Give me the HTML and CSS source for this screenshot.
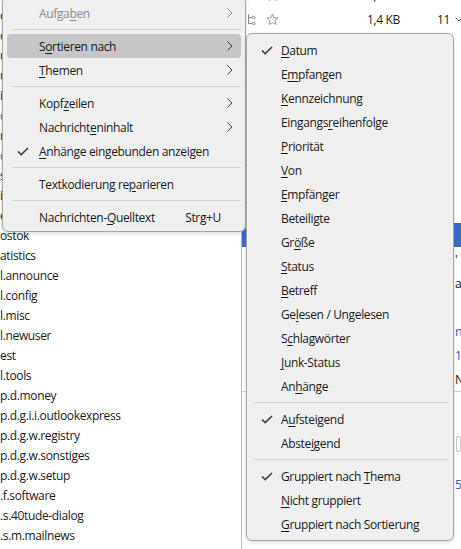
FILE: index.html
```html
<!DOCTYPE html>
<html lang="de">
<head>
<meta charset="utf-8">
<title>Ansicht</title>
<link rel="stylesheet" href="styles.css">
</head>
<body>
<div class="app">
  <aside class="folders">
    <ul class="folder-list">
      <li>o</li>
      <li>c</li>
      <li>u</li>
      <li>u</li>
      <li>i</li>
      <li class="link">d</li>
      <li>r</li>
      <li class="link">d</li>
      <li>s</li>
      <li>i</li>
      <li>e</li>
      <li>ostok</li>
      <li>atistics</li>
      <li>l.announce</li>
      <li>l.config</li>
      <li>l.misc</li>
      <li>l.newuser</li>
      <li>est</li>
      <li>l.tools</li>
      <li>p.d.money</li>
      <li>p.d.g.i.i.outlookexpress</li>
      <li>p.d.g.w.registry</li>
      <li>p.d.g.w.sonstiges</li>
      <li>p.d.g.w.setup</li>
      <li>.f.software</li>
      <li>.s.40tude-dialog</li>
      <li>.s.m.mailnews</li>
    </ul>
  </aside>

  <main class="messages">
    <div class="thread-list">
      <div class="row">
        <span class="c-thread"></span>
        <span class="c-star"><svg width="13" height="13" viewBox="0 0 13 13"><path class="star" d="M6.5 1 L8.1 4.6 L12 5 L9.1 7.6 L9.9 11.5 L6.5 9.5 L3.1 11.5 L3.9 7.6 L1 5 L4.9 4.6 Z"/></svg></span>
        <span class="c-size">1,7 KB</span>
      </div>
      <div class="row">
        <span class="c-thread"><svg width="9" height="11" viewBox="0 0 9 11"><path class="tree" d="M1.5 0.5 V9.5 H5 M1.5 3.5 H5"/><circle class="tree" cx="6.8" cy="3.5" r="1.3"/><circle class="tree" cx="6.8" cy="9.5" r="1.3"/></svg></span>
        <span class="c-star"><svg width="13" height="13" viewBox="0 0 13 13"><path class="star" d="M6.5 1 L8.1 4.6 L12 5 L9.1 7.6 L9.9 11.5 L6.5 9.5 L3.1 11.5 L3.9 7.6 L1 5 L4.9 4.6 Z"/></svg></span>
        <span class="c-size">1,4 KB</span>
        <span class="c-count">11</span>
        <span class="c-toggle"><svg width="8" height="5" viewBox="0 0 8 5"><polyline class="chev" points="0.5,0.5 4,4 7.5,0.5"/></svg></span>
      </div>
      <div class="row"></div>
      <div class="row"></div>
      <div class="row"></div>
      <div class="row"></div>
      <div class="row"></div>
      <div class="row"></div>
      <div class="row"></div>
      <div class="row"></div>
      <div class="row selected"></div>
      <div class="row"><span class="edge">'</span></div>
      <div class="row"><span class="edge">a</span></div>
      <div class="row"></div>
      <div class="row"><span class="edge link">n</span></div>
      <div class="row"><span class="edge link">1</span></div>
      <div class="row"><span class="edge">N</span></div>
    </div>
    <div class="preview">
      <div class="preview-box"></div>
      <div class="preview-link">5</div>
    </div>
  </main>
</div>

<div class="menu menu-view">
  <div class="item disabled"><span class="label">Aufga<u>b</u>en</span><svg class="arrow" width="6" height="10" viewBox="0 0 6 10"><polyline points="0.5,0.5 5,5 0.5,9.5"/></svg></div>
  <div class="sep"></div>
  <div class="item active"><span class="label">S<u>o</u>rtieren nach</span><svg class="arrow" width="6" height="10" viewBox="0 0 6 10"><polyline points="0.5,0.5 5,5 0.5,9.5"/></svg></div>
  <div class="item"><span class="label"><u>T</u>hemen</span><svg class="arrow" width="6" height="10" viewBox="0 0 6 10"><polyline points="0.5,0.5 5,5 0.5,9.5"/></svg></div>
  <div class="sep"></div>
  <div class="item"><span class="label">Kopf<u>z</u>eilen</span><svg class="arrow" width="6" height="10" viewBox="0 0 6 10"><polyline points="0.5,0.5 5,5 0.5,9.5"/></svg></div>
  <div class="item"><span class="label">Nachricht<u>e</u>ninhalt</span><svg class="arrow" width="6" height="10" viewBox="0 0 6 10"><polyline points="0.5,0.5 5,5 0.5,9.5"/></svg></div>
  <div class="item"><svg class="check" width="12" height="9" viewBox="0 0 12 9"><polyline points="1,4.5 4.2,7.6 11,1"/></svg><span class="label"><u>A</u>nhänge eingebunden anzeigen</span></div>
  <div class="sep"></div>
  <div class="item"><span class="label">Textkodierung re<u>p</u>arieren</span></div>
  <div class="sep"></div>
  <div class="item"><span class="label">Nachrichten-<u>Q</u>uelltext</span><span class="key">Strg+U</span></div>
</div>

<div class="menu menu-sort">
  <div class="item"><svg class="check" width="12" height="9" viewBox="0 0 12 9"><polyline points="1,4.5 4.2,7.6 11,1"/></svg><span class="label"><u>D</u>atum</span></div>
  <div class="item"><span class="label">E<u>m</u>pfangen</span></div>
  <div class="item"><span class="label"><u>K</u>ennzeichnung</span></div>
  <div class="item"><span class="label">Eingangs<u>r</u>eihenfolge</span></div>
  <div class="item"><span class="label"><u>P</u>riorität</span></div>
  <div class="item"><span class="label"><u>V</u>on</span></div>
  <div class="item"><span class="label"><u>E</u>mpfänger</span></div>
  <div class="item"><span class="label">Beteili<u>g</u>te</span></div>
  <div class="item"><span class="label">Gr<u>ö</u>ße</span></div>
  <div class="item"><span class="label"><u>S</u>tatus</span></div>
  <div class="item"><span class="label"><u>B</u>etreff</span></div>
  <div class="item"><span class="label">Ge<u>l</u>esen / Ungelesen</span></div>
  <div class="item"><span class="label">S<u>c</u>hlagwörter</span></div>
  <div class="item"><span class="label"><u>J</u>unk-Status</span></div>
  <div class="item"><span class="label">An<u>h</u>änge</span></div>
  <div class="sep"></div>
  <div class="item"><svg class="check" width="12" height="9" viewBox="0 0 12 9"><polyline points="1,4.5 4.2,7.6 11,1"/></svg><span class="label">A<u>u</u>fsteigend</span></div>
  <div class="item"><span class="label">Abste<u>i</u>gend</span></div>
  <div class="sep"></div>
  <div class="item"><svg class="check" width="12" height="9" viewBox="0 0 12 9"><polyline points="1,4.5 4.2,7.6 11,1"/></svg><span class="label">Gruppiert nach <u>T</u>hema</span></div>
  <div class="item"><span class="label"><u>N</u>icht gruppiert</span></div>
  <div class="item"><span class="label"><u>G</u>ruppiert nach Sortierung</span></div>
</div>
</body>
</html>
```

FILE: styles.css
```css
:root {
  --ui-font: "Open Sans", "Noto Sans", sans-serif;
  --text: #1a1a1a;
  --menu-bg: #f0f0f0;
  --menu-border: #a7a7a7;
  --link: #2a5bd7;
}

html, body {
  margin: 0;
  padding: 0;
}

body {
  width: 461px;
  height: 549px;
  overflow: hidden;
  position: relative;
  background: #fff;
  font-family: var(--ui-font);
  font-size: 12px;
  letter-spacing: -0.35px;
  color: var(--text);
}

/* ---------- window content ---------- */
.app {
  display: flex;
  height: 549px;
}

.folders {
  flex: none;
  width: 241px;
  border-right: 1px solid #b7bcc6;
  overflow: hidden;
  background: #fff;
}

.folder-list {
  list-style: none;
  margin: 6px 0 0;
  padding: 0;
}

.folder-list li {
  height: 20px;
  line-height: 20px;
  white-space: nowrap;
}

.folder-list li.link {
  color: var(--link);
}

.messages {
  flex: 1;
  min-width: 0;
  display: flex;
  flex-direction: column;
  overflow: hidden;
}

.thread-list {
  margin-top: -17px;
}

.row {
  height: 24px;
  display: flex;
  align-items: center;
  white-space: nowrap;
}

.row.selected {
  background: #3a6cd0;
}

.c-thread {
  flex: none;
  width: 24px;
  padding-left: 5px;
  box-sizing: border-box;
  display: flex;
  align-items: center;
}

.c-star {
  flex: none;
  width: 14px;
  display: flex;
  align-items: center;
}

.c-size {
  flex: none;
  width: 120px;
  text-align: right;
}

.c-count {
  flex: none;
  width: 50px;
  text-align: right;
}

.c-toggle {
  flex: none;
  padding-left: 5px;
  display: flex;
  align-items: center;
}

.star {
  fill: none;
  stroke: #9b9b9b;
  stroke-width: 1;
  stroke-linejoin: round;
}

.tree {
  fill: none;
  stroke: #8a8a8a;
  stroke-width: 1;
}

.chev {
  fill: none;
  stroke: #555;
  stroke-width: 1;
}

.edge {
  padding-left: 213px;
}

.edge.link {
  color: var(--link);
}

.preview {
  flex: 1;
  border-top: 1px solid #cbd2dc;
  padding-top: 44px;
}

.preview-box {
  margin-left: 214px;
  height: 14px;
  border: 1px solid #c8c8c8;
  border-radius: 2px;
}

.preview-link {
  margin: 24px 0 0 213px;
  color: var(--link);
}

/* ---------- menus ---------- */
.menu {
  position: absolute;
  box-sizing: border-box;
  background: var(--menu-bg);
  border: 1px solid var(--menu-border);
  border-radius: 6px;
  padding: 4px;
  box-shadow: 0 2px 5px rgba(0, 0, 0, 0.12);
}

.menu-view {
  left: 2px;
  top: -4px;
  width: 244px;
  padding-bottom: 2px;
}

.menu-sort {
  left: 246px;
  top: 33px;
  width: 208px;
}

.item {
  position: relative;
  height: 24px;
  display: flex;
  align-items: center;
  padding: 0 8px 0 32px;
  border-radius: 4px;
  white-space: nowrap;
}

.menu-sort .item {
  padding-left: 30px;
}

.item.active {
  background: #c6c6c6;
}

.item.disabled {
  color: #8c8c8c;
}

.item u {
  text-decoration-thickness: 1px;
  text-underline-offset: 2px;
}

.arrow {
  margin-left: auto;
}

.arrow polyline {
  fill: none;
  stroke: #3a3a3a;
  stroke-width: 1;
}

.item.disabled .arrow polyline {
  stroke: #8c8c8c;
}

.check {
  position: absolute;
  left: 10px;
  top: 8px;
}

.check polyline {
  fill: none;
  stroke: #404040;
  stroke-width: 1.6;
}

.key {
  margin-left: auto;
  margin-right: 12px;
}

.sep {
  height: 1px;
  background: #d2d2d2;
  margin: 4px 0 4px 5px;
}

.menu-sort .sep {
  margin: 4px 1px 4px 3px;
}
```
